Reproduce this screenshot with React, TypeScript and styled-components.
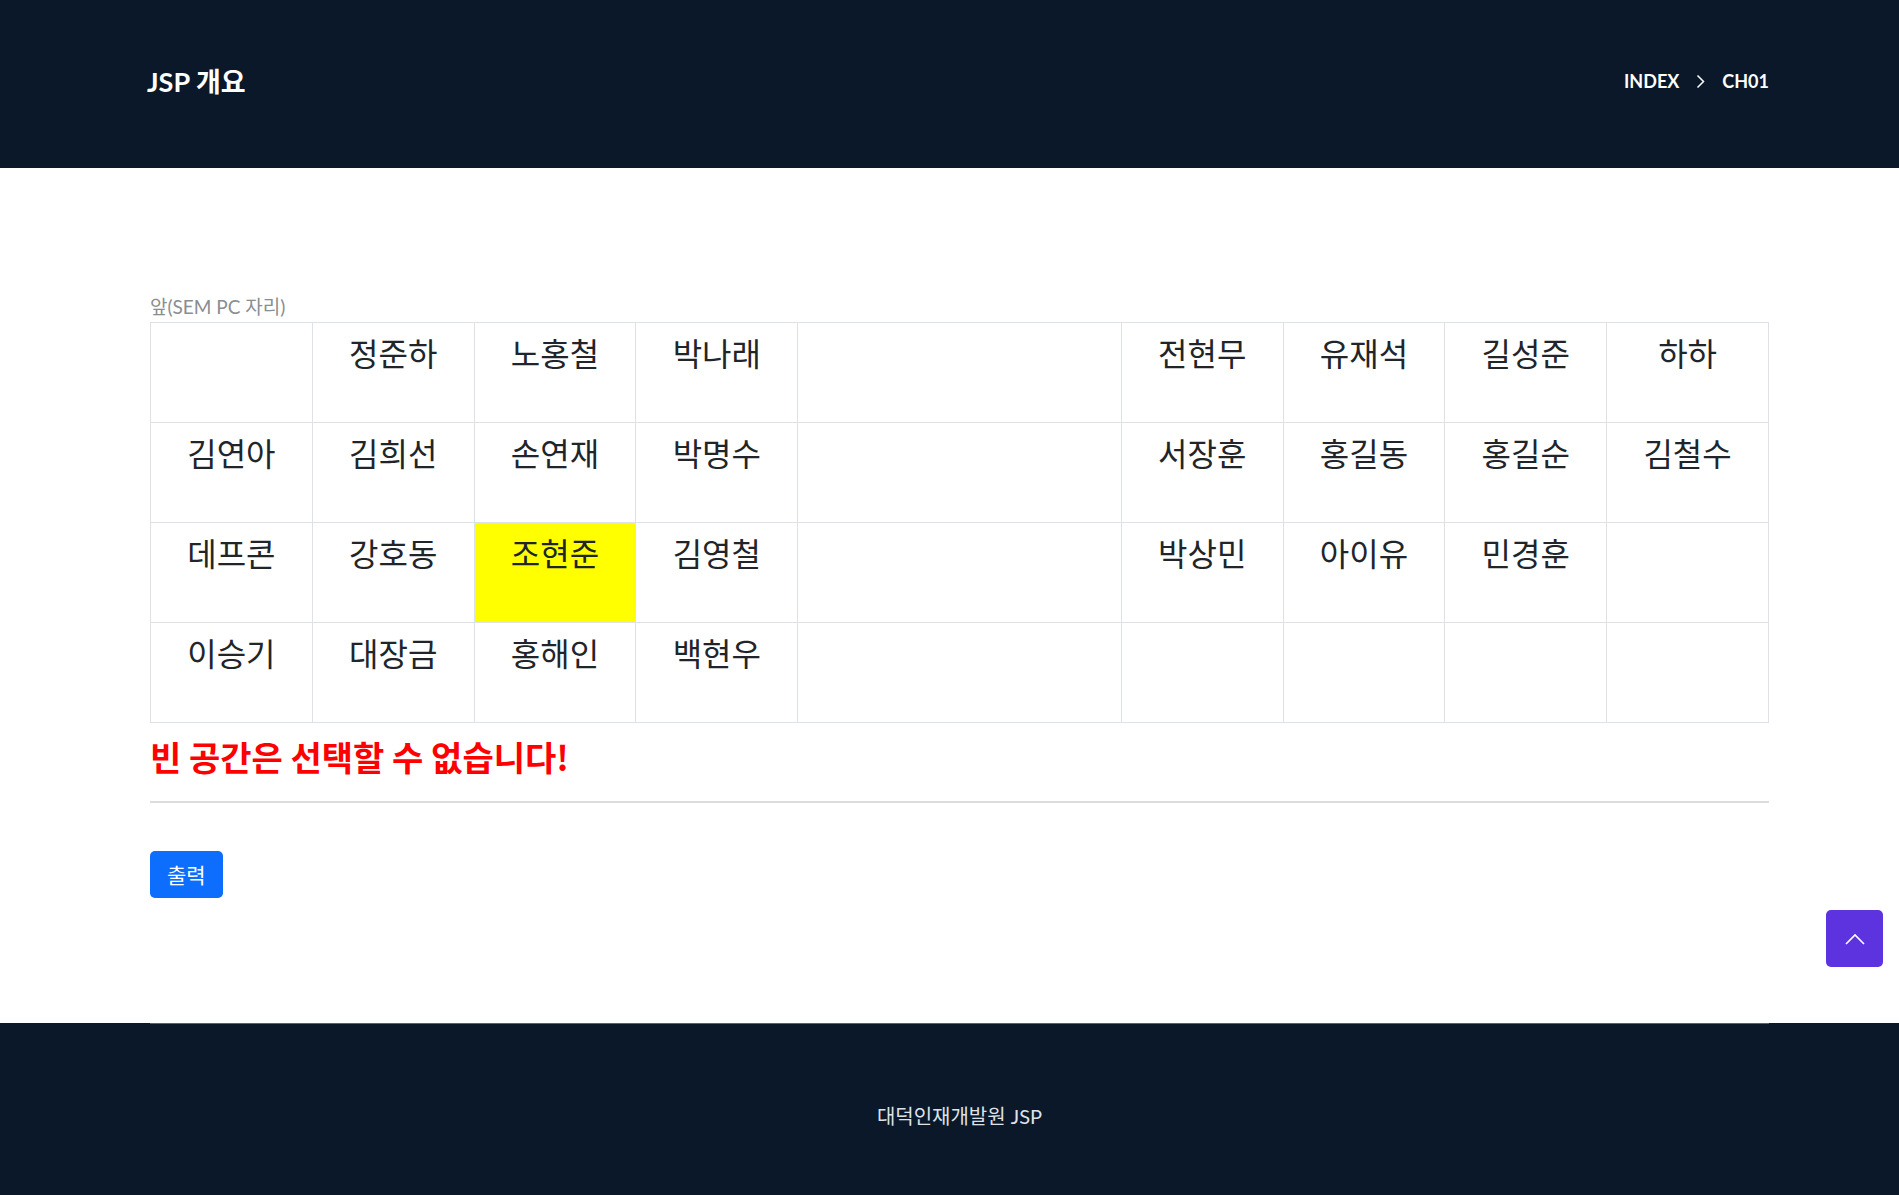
import styled, { createGlobalStyle } from "styled-components";

// #region styled
const GlobalStyle = createGlobalStyle`
  body {
    margin: 0;
    background: #ffffff;
    font-family: "Lato", "Noto Sans CJK KR", sans-serif;
    color: #212529;
  }
`;

const Page = styled.div`
  min-height: 1195px;
  display: flex;
  flex-direction: column;
`;

const Header = styled.header`
  height: 168px;
  padding: 0 130px 8px 147px;
  box-sizing: border-box;

  display: flex;
  align-items: center;
  justify-content: space-between;

  background-color: #0a1829;
`;

const Title = styled.h1`
  margin: 0;

  font-family: "Lato", "Noto Sans CJK KR", sans-serif;
  font-size: 27px;
  font-weight: 700;
  color: #ffffff;
`;

const Crumbs = styled.nav`
  display: flex;
  align-items: center;
  gap: 17px;
  margin-bottom: -2px;

  font-size: 18px;
  font-weight: 700;
  color: #ffffff;
`;

const Main = styled.main`
  padding: 126px 130px 125px 150px;
`;

const Caption = styled.div`
  margin-bottom: 2px;

  font-size: 19px;
  line-height: 26px;
  color: #8a8d91;
`;

const SeatTable = styled.table`
  width: 100%;
  border-collapse: collapse;
  table-layout: fixed;
`;

const Seat = styled.td<{ $picked?: boolean }>`
  height: 100px;
  padding: 5px 8px;
  box-sizing: border-box;

  vertical-align: top;
  text-align: center;

  border: 1px solid #dee2e6;
  background-color: ${(p) => (p.$picked ? "#ffff00" : "transparent")};

  font-family: "Noto Sans CJK KR", sans-serif;
  font-size: 32px;
  line-height: 1.5;
  color: #212529;
`;

const Message = styled.h3`
  margin: 14px 0 23px;

  font-family: "Noto Sans CJK KR", sans-serif;
  font-size: 34px;
  font-weight: 700;
  line-height: 1.2;
  color: #ff0000;
`;

const Rule = styled.hr`
  margin: 0 0 48px;

  border: 0;
  border-top: 2px solid #dcdcdc;
`;

const PrintButton = styled.button`
  height: 47px;
  padding: 0 17px;

  display: inline-flex;
  align-items: center;

  border: 0;
  border-radius: 5px;
  background-color: #0d6efd;

  font-family: "Noto Sans CJK KR", sans-serif;
  font-size: 21px;
  color: #ffffff;
`;

const Footer = styled.footer`
  height: 173px;
  padding: 0 130px 0 150px;

  background-color: #0a1829;
`;

const FooterInner = styled.div`
  padding-top: 77px;

  border-top: 1px solid #5b6169;

  text-align: center;
  font-size: 20px;
  line-height: 30px;
  color: #dde2e8;
`;

const TopButton = styled.button`
  position: fixed;
  right: 16px;
  bottom: 228px;

  width: 57px;
  height: 57px;

  display: flex;
  align-items: center;
  justify-content: center;

  border: 0;
  border-radius: 5px;
  background-color: #5c33df;
`;
// #endregion styled

const rows: string[][] = [
  ["", "정준하", "노홍철", "박나래", "전현무", "유재석", "길성준", "하하"],
  ["김연아", "김희선", "손연재", "박명수", "서장훈", "홍길동", "홍길순", "김철수"],
  ["데프콘", "강호동", "조현준", "김영철", "박상민", "아이유", "민경훈", ""],
  ["이승기", "대장금", "홍해인", "백현우", "", "", "", ""],
];

const picked = "조현준";

export default function App() {
  return (
    <Page>
      <GlobalStyle />
      <Header>
        <Title>JSP 개요</Title>
        <Crumbs>
          <span>INDEX</span>
          <svg width="9" height="15" viewBox="0 0 9 15" fill="none">
            <path d="M1.5 1.5 L7.5 7.5 L1.5 13.5" stroke="#ffffff" strokeWidth="1.5" />
          </svg>
          <span>CH01</span>
        </Crumbs>
      </Header>

      <Main>
        <Caption>앞(SEM PC 자리)</Caption>
        <SeatTable>
          <colgroup>
            <col span={4} style={{ width: "10%" }} />
            <col style={{ width: "20%" }} />
            <col span={4} style={{ width: "10%" }} />
          </colgroup>
          <tbody>
            {rows.map((row, r) => (
              <tr key={r}>
                {row.slice(0, 4).map((name, c) => (
                  <Seat key={c} $picked={name === picked}>{name}</Seat>
                ))}
                <Seat />
                {row.slice(4).map((name, c) => (
                  <Seat key={c + 4} $picked={name === picked}>{name}</Seat>
                ))}
              </tr>
            ))}
          </tbody>
        </SeatTable>
        <Message>빈 공간은 선택할 수 없습니다!</Message>
        <Rule />
        <PrintButton>출력</PrintButton>
      </Main>

      <Footer>
        <FooterInner>대덕인재개발원 JSP</FooterInner>
      </Footer>

      <TopButton aria-label="맨 위로">
        <svg width="20" height="12" viewBox="0 0 20 12" fill="none">
          <path d="M1 11 L10 2 L19 11" stroke="#ffffff" strokeWidth="1.6" />
        </svg>
      </TopButton>
    </Page>
  );
}
